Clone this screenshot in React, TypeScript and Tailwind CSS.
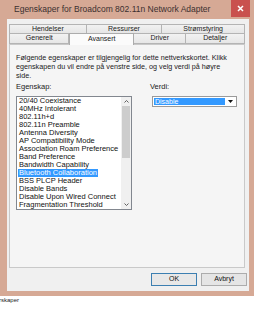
import React from "react";

const items = [
  "20/40 Coexistance",
  "40MHz Intolerant",
  "802.11h+d",
  "802.11n Preamble",
  "Antenna Diversity",
  "AP Compatibility Mode",
  "Association Roam Preference",
  "Band Preference",
  "Bandwidth Capability",
  "Bluetooth Collaboration",
  "BSS PLCP Header",
  "Disable Bands",
  "Disable Upon Wired Connect",
  "Fragmentation Threshold",
];

function Tab({ label, w, h, selected }: { label: string; w: string; h: string; selected?: boolean }) {
  return (
    <div
      className={
        selected
          ? `${w} ${h} relative z-10 -mb-px border border-b-0 border-[#acacac] bg-[#fbfbfb] flex items-center justify-center text-[7px] text-[#222]`
          : `${w} ${h} border border-[#b4b4b4] bg-gradient-to-b from-[#f2f2f2] to-[#e6e6e6] flex items-center justify-center text-[7px] text-[#222] -ml-px first:ml-0`
      }
    >
      {label}
    </div>
  );
}

export default function App() {
  return (
    <div className="w-[254px] h-[320px] bg-white overflow-hidden font-['Liberation_Sans',sans-serif]">
      <div className="w-[254px] h-[296px] bg-[#d6a995] flex flex-col">
        <div className="h-[19px] flex items-start justify-between">
          <span className="pl-[14px] pt-[4px] text-[8.5px] leading-[10px] text-[#3b3030] whitespace-nowrap">
            Egenskaper for Broadcom 802.11n Network Adapter
          </span>
          <div className="w-[19px] h-[17px] mr-[4px] bg-[#c9514e] flex items-center justify-center">
            <svg width="7" height="7" viewBox="0 0 7 7">
              <path d="M1 1 L6 6 M6 1 L1 6" stroke="white" strokeWidth="1.5" />
            </svg>
          </div>
        </div>
        <div className="flex-1 ml-[7px] mr-[5px] mb-[5px] bg-[#f0f0f0] flex flex-col pl-[2px] pr-[4px] pt-[5px]">
          <div className="flex h-[10px]">
            <Tab label="Hendelser" w="w-[78px]" h="h-[10px]" />
            <Tab label="Ressurser" w="w-[77px]" h="h-[10px]" />
            <Tab label="Strømstyring" w="w-[84px]" h="h-[10px]" />
          </div>
          <div className="flex h-[11px] -mt-px items-end">
            <Tab label="Generelt" w="w-[61px]" h="h-[11px]" />
            <Tab label="Avansert" w="w-[65px]" h="h-[12px]" selected />
            <Tab label="Driver" w="w-[54px]" h="h-[11px]" />
            <Tab label="Detaljer" w="w-[60px]" h="h-[11px]" />
          </div>
          <div className="h-[224px] border border-[#c9c9c9] bg-[#f5f5f5] px-[6px] pt-[8px] flex flex-col">
            <p className="text-[7.2px] leading-[9px] text-[#1a1a1a] pr-[4px]">
              Følgende egenskaper er tilgjengelig for dette nettverkskortet. Klikk egenskapen du vil endre på venstre side, og velg verdi på høyre side.
            </p>
            <div className="flex mt-[3px]">
              <div className="w-[116px] flex flex-col">
                <div className="text-[7.5px] leading-[8px] h-[8px] text-[#1a1a1a]">Egenskap:</div>
                <div className="mt-[5px] h-[114px] border border-[#82878f] bg-white flex">
                  <div className="flex-1 flex flex-col pl-[1px] overflow-hidden">
                    {items.map((it) => (
                      <div key={it} className="h-[8px] flex items-center">
                        <span
                          className={
                            it === "Bluetooth Collaboration"
                              ? "px-[1px] bg-[#3399ff] text-white text-[7.5px] leading-[8px] whitespace-nowrap"
                              : "px-[1px] text-[#111] text-[7.5px] leading-[8px] whitespace-nowrap"
                          }
                        >
                          {it}
                        </span>
                      </div>
                    ))}
                  </div>
                  <div className="w-[10px] bg-[#f0f0f0] flex flex-col items-center">
                    <div className="h-[9px] flex items-center justify-center">
                      <svg width="5" height="3" viewBox="0 0 5 3">
                        <path d="M0.5 2.5 L2.5 0.5 L4.5 2.5" stroke="#606060" fill="none" strokeWidth="1" />
                      </svg>
                    </div>
                    <div className="w-[8px] h-[52px] bg-[#cdcdcd]" />
                    <div className="flex-1" />
                    <div className="h-[9px] flex items-center justify-center">
                      <svg width="5" height="3" viewBox="0 0 5 3">
                        <path d="M0.5 0.5 L2.5 2.5 L4.5 0.5" stroke="#606060" fill="none" strokeWidth="1" />
                      </svg>
                    </div>
                  </div>
                </div>
              </div>
              <div className="ml-[20px] w-[85px] flex flex-col">
                <div className="text-[7.5px] leading-[8px] h-[8px] text-[#1a1a1a] -ml-[2px]">Verdi:</div>
                <div className="mt-[5px] h-[11px] border border-[#9a9a9a] bg-white flex p-[1px]">
                  <div className="flex-1 bg-[#3399ff] text-white text-[7px] leading-[7px] pl-[1px]">Disable</div>
                  <div className="w-[10px] flex items-center justify-center">
                    <svg width="5" height="3" viewBox="0 0 5 3">
                      <path d="M0 0 L5 0 L2.5 3 Z" fill="#111" />
                    </svg>
                  </div>
                </div>
              </div>
            </div>
          </div>
          <div className="flex justify-end gap-[4px] mt-[5px] -mr-[2px]">
            <div className="w-[46px] h-[13px] border border-[#3c7fb1] bg-[#e8e8e8] flex items-center justify-center text-[7px] text-[#111]">
              OK
            </div>
            <div className="w-[46px] h-[13px] border border-[#acacac] bg-[#e5e5e5] flex items-center justify-center text-[7px] text-[#111]">
              Avbryt
            </div>
          </div>
        </div>
      </div>
      <div className="text-[6px] leading-[7px] text-[#222] -ml-[1px] mt-px">rskaper</div>
    </div>
  );
}
